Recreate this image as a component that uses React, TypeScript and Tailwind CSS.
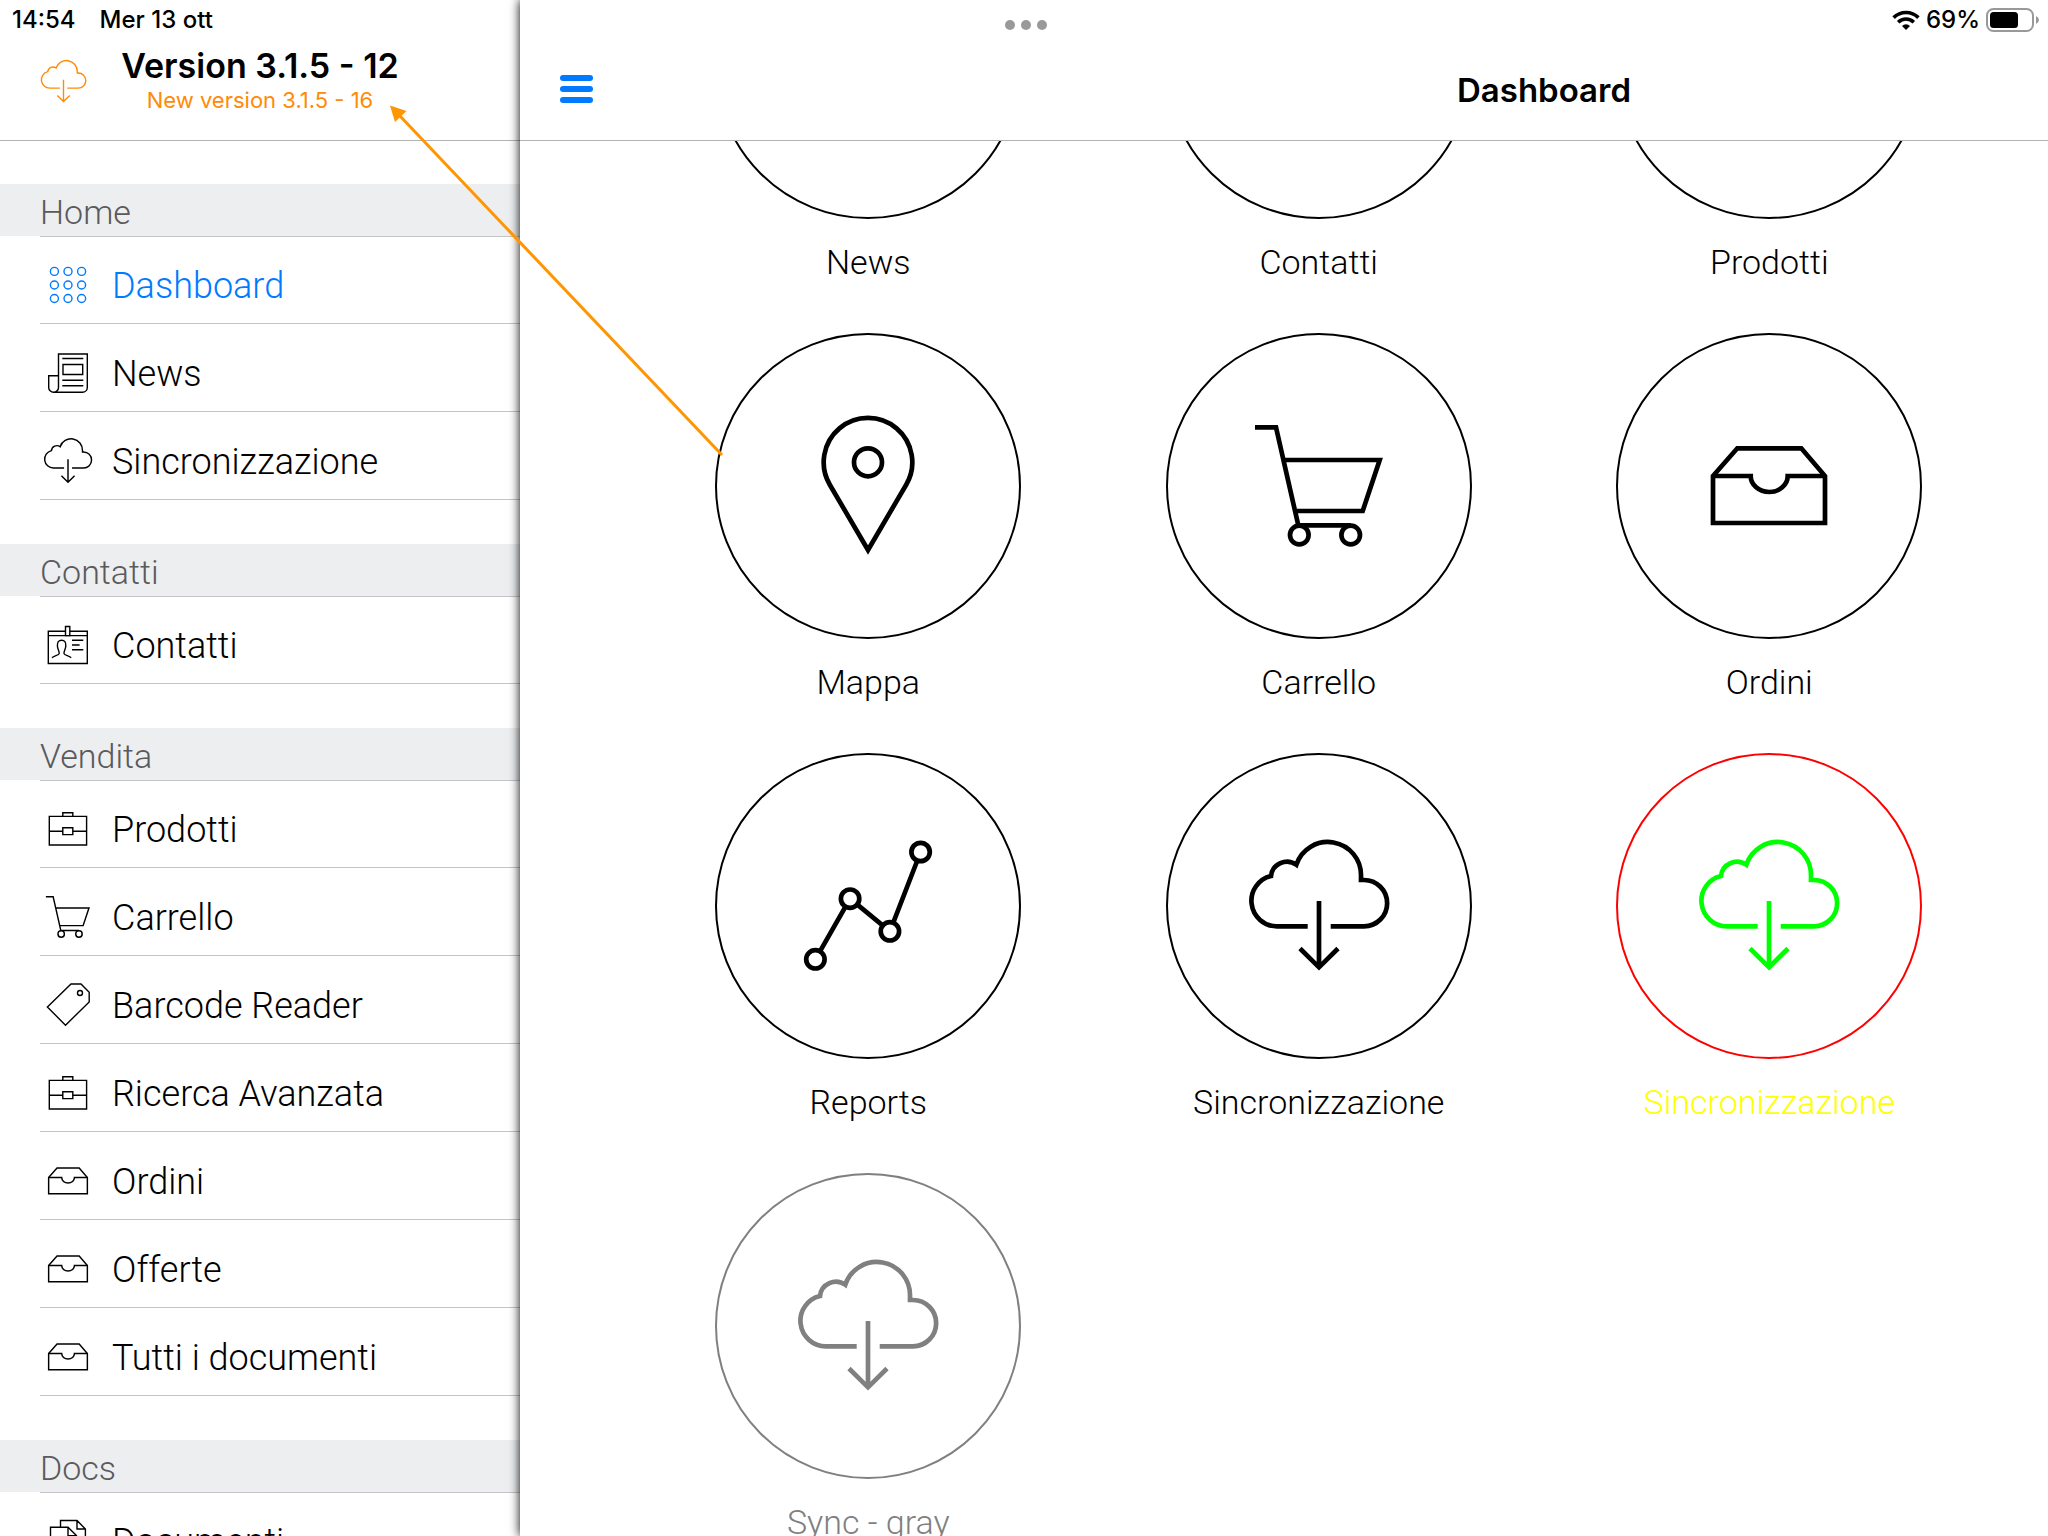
import type { ReactNode } from "react";

type IconName =
  | "grid" | "news" | "cloud" | "contact" | "briefcase" | "cart"
  | "tag" | "tray" | "docs" | "pin" | "chart";

/* Icons shared by the menu and the tiles, drawn on a 160 unit grid. */
const largeIcons: Partial<Record<IconName, ReactNode>> = {
  cloud: (
    <>
      <path d="M68.7 100.3H38A25.5 25.5 0 0 1 32 50A16 16 0 0 1 57.3 38.7A33.2 33.2 0 0 1 122 50V54H125A23.15 23.15 0 0 1 125 100.3H91.7" />
      <path d="M80 75V140M61 122.5L80 141.3L99 122.5" />
    </>
  ),
  cart: (
    <>
      <path d="M16 21.3H37L59.3 119.3M45 54H140.7L123.7 105H57M60 119.3H112" />
      <circle cx="60.3" cy="129" r="9.3" className="fill-white" />
      <circle cx="111.7" cy="129" r="9.3" className="fill-white" />
    </>
  ),
  tray: (
    <>
      <path d="M24 70L48.3 42.3H112.3L136 70V117H24Z" />
      <path d="M24 70H61.7A18.5 16 0 0 0 98.7 70H136" />
    </>
  ),
  pin: (
    <>
      <path d="M80 144L41.8 78.7A44.3 44.3 0 1 1 118.2 78.7Z" />
      <circle cx="80" cy="56.3" r="14" />
    </>
  ),
  chart: (
    <>
      <path d="M27.4 133.3L62.1 72.7L101.9 105.3L132.6 26" />
      <circle cx="27.4" cy="133.3" r="9.2" className="fill-white" />
      <circle cx="62.1" cy="72.7" r="9.2" className="fill-white" />
      <circle cx="101.9" cy="105.3" r="9.2" className="fill-white" />
      <circle cx="132.6" cy="26" r="9.2" className="fill-white" />
    </>
  ),
};

/* Icons that only the menu uses, drawn on a 56 unit grid. */
const smallIcons: Partial<Record<IconName, ReactNode>> = {
  grid: (
    <>
      {[14.4, 28, 41.5].map((cy) =>
        [14.4, 28, 41.6].map((cx) => <circle key={`${cx}-${cy}`} cx={cx} cy={cy} r="4" />),
      )}
    </>
  ),
  news: (
    <>
      <path d="M18.5 30.7H8.7V42.4A4.9 4.9 0 0 0 18.5 42.4V9H47.3V42.4A4.8 4.8 0 0 1 42.5 47.2H13.6" />
      <path d="M22.3 13.5H43.3M23 19.5H42.7V29.5H23ZM22.3 35.2H43.3M22.3 40.8H43.3" />
    </>
  ),
  contact: (
    <>
      <path d="M25.5 14.3H8.3V46.5H47.3V14.3H29.8M8.3 18.6H47.3" />
      <path d="M25.5 9.5H29.8V18.6H25.5Z" className="fill-white" />
      <path d="M12 40.8C14 38.6 18.6 38.6 19.2 36.6C19.6 34.6 17.6 32.4 17.4 29C17.2 25 18.6 23.2 21.6 23.2C24.6 23.2 26 25 25.8 29C25.6 32.4 23.6 34.6 24 36.6C24.6 38.6 29.2 38.6 31.2 40.8" />
      <path d="M32 23.2H43.3M32 28H39.6M32 32.8H43.3" />
    </>
  ),
  briefcase: (
    <>
      <path d="M9.3 15.4H46.6V44H9.3ZM22.8 15.4V11.8H32.8V15.4M9.3 30.2H22.8M32.8 30.2H46.6" />
      <path d="M22.8 26.8H32.8V33.6H22.8Z" />
    </>
  ),
  tag: (
    <>
      <path d="M7.4 30L31 7H41L49.2 15.3V25L25.5 48.2Z" />
      <circle cx="40" cy="16" r="2.5" />
    </>
  ),
  docs: (
    <>
      <path d="M20.5 14V7.5H37L45.4 16V42H36.5M37 7.5V16H45.4" />
      <path d="M10.5 14.2H28L36.5 22.6V48.5H10.5ZM28 14.2V22.6H36.5" />
    </>
  ),
};

function Icon({ name, className }: { name: IconName; className: string }) {
  const large = largeIcons[name];
  return (
    <svg
      viewBox={large ? "-1 -1 162 162" : "0 0 56 56"}
      fill="none"
      stroke="currentColor"
      strokeWidth={large ? 4.2 : 1.4}
      className={className}
      aria-hidden="true"
    >
      {large ?? smallIcons[name]}
    </svg>
  );
}

type Item = { label: string; icon: IconName; active?: boolean };

const sections: { title: string; items: Item[] }[] = [
  {
    title: "Home",
    items: [
      { label: "Dashboard", icon: "grid", active: true },
      { label: "News", icon: "news" },
      { label: "Sincronizzazione", icon: "cloud" },
    ],
  },
  { title: "Contatti", items: [{ label: "Contatti", icon: "contact" }] },
  {
    title: "Vendita",
    items: [
      { label: "Prodotti", icon: "briefcase" },
      { label: "Carrello", icon: "cart" },
      { label: "Barcode Reader", icon: "tag" },
      { label: "Ricerca Avanzata", icon: "briefcase" },
      { label: "Ordini", icon: "tray" },
      { label: "Offerte", icon: "tray" },
      { label: "Tutti i documenti", icon: "tray" },
    ],
  },
  { title: "Docs", items: [{ label: "Documenti", icon: "docs" }] },
];

type Tile = { label: string; icon: IconName; ring?: string; glyph?: string; text?: string };

const tileRows: Tile[][] = [
  [
    { label: "News", icon: "news" },
    { label: "Contatti", icon: "contact" },
    { label: "Prodotti", icon: "briefcase" },
  ],
  [
    { label: "Mappa", icon: "pin" },
    { label: "Carrello", icon: "cart" },
    { label: "Ordini", icon: "tray" },
  ],
  [
    { label: "Reports", icon: "chart" },
    { label: "Sincronizzazione", icon: "cloud" },
    {
      label: "Sincronizzazione",
      icon: "cloud",
      ring: "border-[#ff0000]",
      glyph: "text-[#00ff00]",
      text: "text-[#ffff00]",
    },
  ],
  [
    {
      label: "Sync - gray",
      icon: "cloud",
      ring: "border-[#808080]",
      glyph: "text-[#808080]",
      text: "text-[#808080]",
    },
  ],
];

function StatusBar() {
  return (
    <div className="pointer-events-none absolute inset-x-0 top-0 z-20 grid h-10 grid-cols-3 items-center pr-2 pl-3 text-[24px] font-medium">
      <div className="flex gap-6">
        <span>14:54</span>
        <span>Mer 13 ott</span>
      </div>
      <div className="flex justify-center gap-1.5 pt-2.5">
        <span className="size-2.5 rounded-full bg-[#999999]" />
        <span className="size-2.5 rounded-full bg-[#999999]" />
        <span className="size-2.5 rounded-full bg-[#999999]" />
      </div>
      <div className="flex items-center justify-end gap-1.5">
        <svg viewBox="0 0 28 20" className="h-5 w-7" fill="none" stroke="currentColor" strokeWidth="3.6" aria-hidden="true">
          <path d="M1.6 7.6A17.6 17.6 0 0 1 26.4 7.6" />
          <path d="M6.2 12.3A11 11 0 0 1 21.8 12.3" />
          <path d="M14 20L10 15.9A5.8 5.8 0 0 1 18 15.9Z" fill="currentColor" stroke="none" />
        </svg>
        <span>69%</span>
        <svg viewBox="0 0 54 24" className="h-6 w-[54px]" fill="none" aria-hidden="true">
          <rect x="1" y="1" width="46" height="22" rx="6.5" stroke="#999999" strokeWidth="2" />
          <rect x="4" y="4" width="28" height="16" rx="3.5" fill="#000000" />
          <path d="M50 8Q53 9.5 53 12T50 16Z" fill="#999999" />
        </svg>
      </div>
    </div>
  );
}

function Sidebar() {
  return (
    <aside className="flex w-[520px] shrink-0 flex-col">
      <header className="z-[1] grid h-[140px] shrink-0 grid-cols-[90px_1fr_90px] bg-white pt-10 shadow-[0_1px_0_#b2b2b2]">
        <button type="button" aria-label="Aggiorna" className="flex justify-end pt-[15px] text-[#ff8a05]">
          <Icon name="cloud" className="size-[53px]" />
        </button>
        <div className="pt-1.5 text-center">
          <h1 className="text-[34px] leading-10 font-semibold">Version 3.1.5 - 12</h1>
          <p className="text-[22px] leading-7 text-[#ff8a05]">New version 3.1.5 - 16</p>
        </div>
      </header>
      <nav className="min-h-0 flex-1 overflow-hidden font-['Roboto',sans-serif] font-light">
        {sections.map((section) => (
          <section key={section.title} className="pt-11">
            <h2 className="flex h-[52px] items-center bg-[#edeef0] pt-1 pl-10 text-[34px] text-[#5a5a5c]">
              {section.title}
            </h2>
            <ul className="ml-10 border-t border-[#c4c4c6]">
              {section.items.map((item, i) => (
                <li key={item.label} className={i === 0 ? "h-[87px]" : "h-[88px]"}>
                  <button
                    type="button"
                    aria-current={item.active ? "page" : undefined}
                    className={
                      item.active
                        ? "flex h-full w-full items-center gap-4 border-b border-[#c4c4c6] pt-2.5 text-[36px] text-[#007aff]"
                        : "flex h-full w-full items-center gap-4 border-b border-[#c4c4c6] pt-2.5 text-[36px]"
                    }
                  >
                    <Icon name={item.icon} className="size-14 shrink-0" />
                    <span className="pt-0.5">{item.label}</span>
                  </button>
                </li>
              ))}
            </ul>
          </section>
        ))}
      </nav>
    </aside>
  );
}

function DashboardTile({ tile }: { tile: Tile }) {
  return (
    <button type="button" className="flex h-[420px] flex-col items-center">
      <span
        className={`flex size-[306px] shrink-0 items-center justify-center rounded-full border-2 ${tile.ring ?? "border-black"} ${tile.glyph ?? "text-black"}`}
      >
        <svg viewBox="0 0 160 160" className="size-40" fill="none" stroke="currentColor" strokeWidth="4.7" aria-hidden="true">
          {largeIcons[tile.icon]}
        </svg>
      </span>
      <span
        className={`mt-[23px] font-['Roboto',sans-serif] text-[34px] leading-10 font-light ${tile.text ?? "text-black"}`}
      >
        {tile.label}
      </span>
    </button>
  );
}

function Dashboard() {
  return (
    <main className="z-10 flex w-screen shrink-0 flex-col bg-white shadow-[0_0_10px_#000000]">
      <header className="z-[1] grid h-[140px] shrink-0 grid-cols-3 items-center bg-white px-10 pt-[38px] shadow-[0_1px_0_#b2b2b2]">
        <button type="button" aria-label="Menu" className="flex w-[33px] flex-col gap-[5px] text-[#007aff]">
          <span className="h-1.5 rounded-sm bg-[#007aff]" />
          <span className="h-1.5 rounded-sm bg-[#007aff]" />
          <span className="h-1.5 rounded-sm bg-[#007aff]" />
        </button>
        <h2 className="pt-0.5 text-center text-[33px] leading-10 font-semibold">Dashboard</h2>
      </header>
      <div className="min-h-0 flex-1 overflow-hidden">
        <div className="-mt-[227px]">
          {tileRows.map((row, i) => (
            <div key={i} className="grid grid-cols-4 px-[123px]">
              {row.map((tile, j) => (
                <DashboardTile key={j} tile={tile} />
              ))}
            </div>
          ))}
        </div>
      </div>
    </main>
  );
}

/* Callout that points from the dashboard to the version notice. */
function Callout() {
  return (
    <svg
      viewBox="0 0 340 360"
      className="pointer-events-none absolute top-[100px] left-[386px] z-30 h-[360px] w-[340px]"
      aria-hidden="true"
    >
      <path d="M14 16L336 355" stroke="#ff9500" strokeWidth="3" />
      <path d="M4 5.5L20.5 11L9 22Z" fill="#ff9500" />
    </svg>
  );
}

export default function App() {
  return (
    <div className="relative flex h-screen overflow-hidden bg-white font-['Inter',sans-serif] text-black">
      <StatusBar />
      <Sidebar />
      <Dashboard />
      <Callout />
    </div>
  );
}
